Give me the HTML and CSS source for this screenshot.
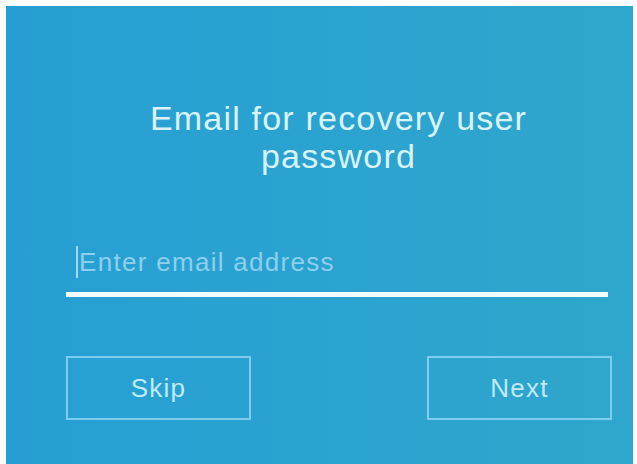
FILE: index.html
```html
<!DOCTYPE html>
<html>
<head>
<meta charset="utf-8">
<link rel="stylesheet" href="styles.css">
</head>
<body>
<div class="panel">
  <h1 class="title">Email for recovery user<br>password</h1>
  <div class="field">
    <span class="caret"></span><span class="placeholder">Enter email address</span>
  </div>
  <div class="line"></div>
  <div class="actions">
    <div class="btn">Skip</div>
    <div class="btn">Next</div>
  </div>
</div>
</body>
</html>
```
FILE: styles.css
```css
html, body {
  margin: 0;
  padding: 0;
  background: #fbfdfe;
  width: 637px;
  height: 464px;
  overflow: hidden;
}
.panel {
  margin: 6px 0 0 6px;
  width: 627px;
  height: 470px;
  background: linear-gradient(90deg, #279ed3 0%, #2ba3d0 50%, #2fa6cb 100%);
  font-family: "Liberation Sans", Arial, sans-serif;
  box-sizing: border-box;
  padding: 93px 0 0 60px;
}
.title {
  margin: 0;
  width: 545px;
  text-align: center;
  font-weight: normal;
  font-size: 34px;
  letter-spacing: 1.2px;
  line-height: 38px;
  color: #d9f3fb;
}
.field {
  margin-top: 70px;
  height: 34px;
  display: flex;
  align-items: center;
  padding-left: 10px;
}
.caret {
  width: 2px;
  height: 32px;
  background: #9edbf2;
  margin-right: 1px;
}
.placeholder {
  font-size: 26px;
  letter-spacing: 1.3px;
  color: #8cd0ee;
}
.line {
  margin-top: 13px;
  width: 542px;
  height: 5px;
  background: #f2fcff;
}
.actions {
  margin-top: 59px;
  display: flex;
  justify-content: space-between;
  width: 546px;
}
.btn {
  width: 185px;
  height: 64px;
  box-sizing: border-box;
  border: 2px solid #7ccdee;
  display: flex;
  align-items: center;
  justify-content: center;
  font-size: 26px;
  letter-spacing: 1.2px;
  color: #bfeaf8;
}
```
